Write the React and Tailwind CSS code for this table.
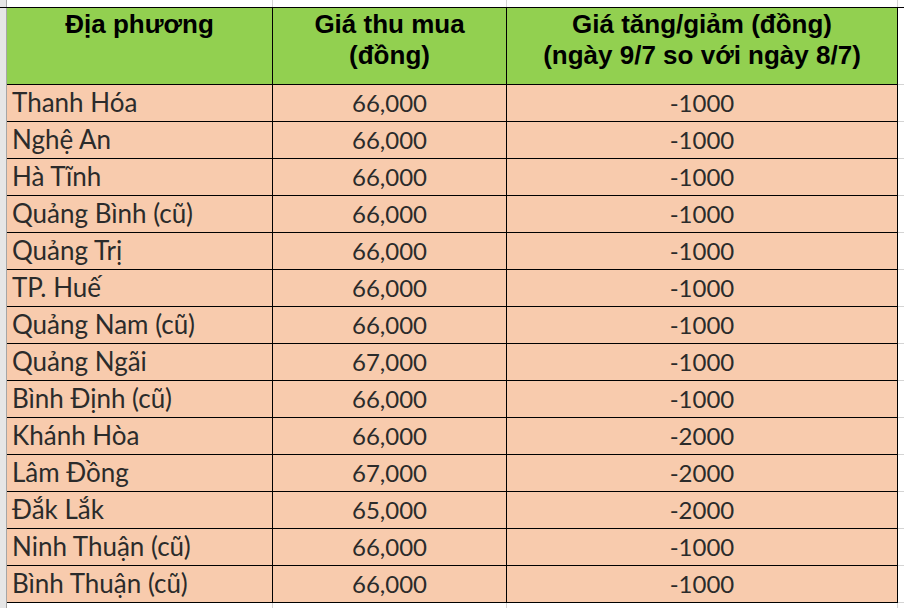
import React from 'react';

const rows = [
  ['Thanh Hóa', '66,000', '-1000'],
  ['Nghệ An', '66,000', '-1000'],
  ['Hà Tĩnh', '66,000', '-1000'],
  ['Quảng Bình (cũ)', '66,000', '-1000'],
  ['Quảng Trị', '66,000', '-1000'],
  ['TP. Huế', '66,000', '-1000'],
  ['Quảng Nam (cũ)', '66,000', '-1000'],
  ['Quảng Ngãi', '67,000', '-1000'],
  ['Bình Định (cũ)', '66,000', '-1000'],
  ['Khánh Hòa', '66,000', '-2000'],
  ['Lâm Đồng', '67,000', '-2000'],
  ['Đắk Lắk', '65,000', '-2000'],
  ['Ninh Thuận (cũ)', '66,000', '-1000'],
  ['Bình Thuận (cũ)', '66,000', '-1000'],
];

// spreadsheet grid: row-header strip | 3 columns | leftover gridline area
const cols = 'grid grid-cols-[7px_266px_234px_391px_1fr]';

function Strip() {
  return <div className="bg-[#e6e6e6] border-r border-[#a6a6a6]" />;
}

function App() {
  return (
    <div className="w-[904px] h-[608px] overflow-hidden bg-white">
      {/* white band above the table */}
      <div className={`${cols} h-[8px] border-b border-black`}>
        <Strip />
        <div className="border-r border-[#d4d4d4]" />
        <div className="border-r border-[#d4d4d4]" />
        <div className="border-r border-[#d4d4d4]" />
        <div />
      </div>

      {/* header */}
      <div className={`${cols} h-[77px] font-['Liberation_Sans',Arial,sans-serif] font-bold text-[26px] leading-[31px] text-black`}>
        <Strip />
        <div className="bg-[#92d050] border-r border-b border-black text-center pt-px">Địa phương</div>
        <div className="bg-[#92d050] border-r border-b border-black text-center pt-px">
          Giá thu mua
          <br />
          (đồng)
        </div>
        <div className="bg-[#92d050] border-r border-b border-black text-center pt-px">
          Giá tăng/giảm (đồng)
          <br />
          (ngày 9/7 so với ngày 8/7)
        </div>
        <div className="border-b border-[#d4d4d4]" />
      </div>

      {/* data rows */}
      {rows.map(([place, price, diff]) => (
        <div
          key={place}
          className={`${cols} h-[37px] overflow-hidden font-['Lato','Open_Sans',sans-serif] text-[#2b2b2b]`}
        >
          <Strip />
          <div className="bg-[#f8cbad] border-r border-b border-black pl-[5px] whitespace-nowrap text-[26px] leading-[35px]">{place}</div>
          <div className="bg-[#f8cbad] border-r border-b border-black text-center text-[24px] leading-[36px]">{price}</div>
          <div className="bg-[#f8cbad] border-r border-b border-black text-center text-[24px] leading-[36px]">{diff}</div>
          <div className="border-b border-[#d4d4d4]" />
        </div>
      ))}

      {/* white band below */}
      <div className={`${cols} h-[10px]`}>
        <Strip />
        <div className="border-r border-[#d4d4d4]" />
        <div className="border-r border-[#d4d4d4]" />
        <div className="border-r border-[#d4d4d4]" />
        <div />
      </div>
    </div>
  );
}

export default App;
